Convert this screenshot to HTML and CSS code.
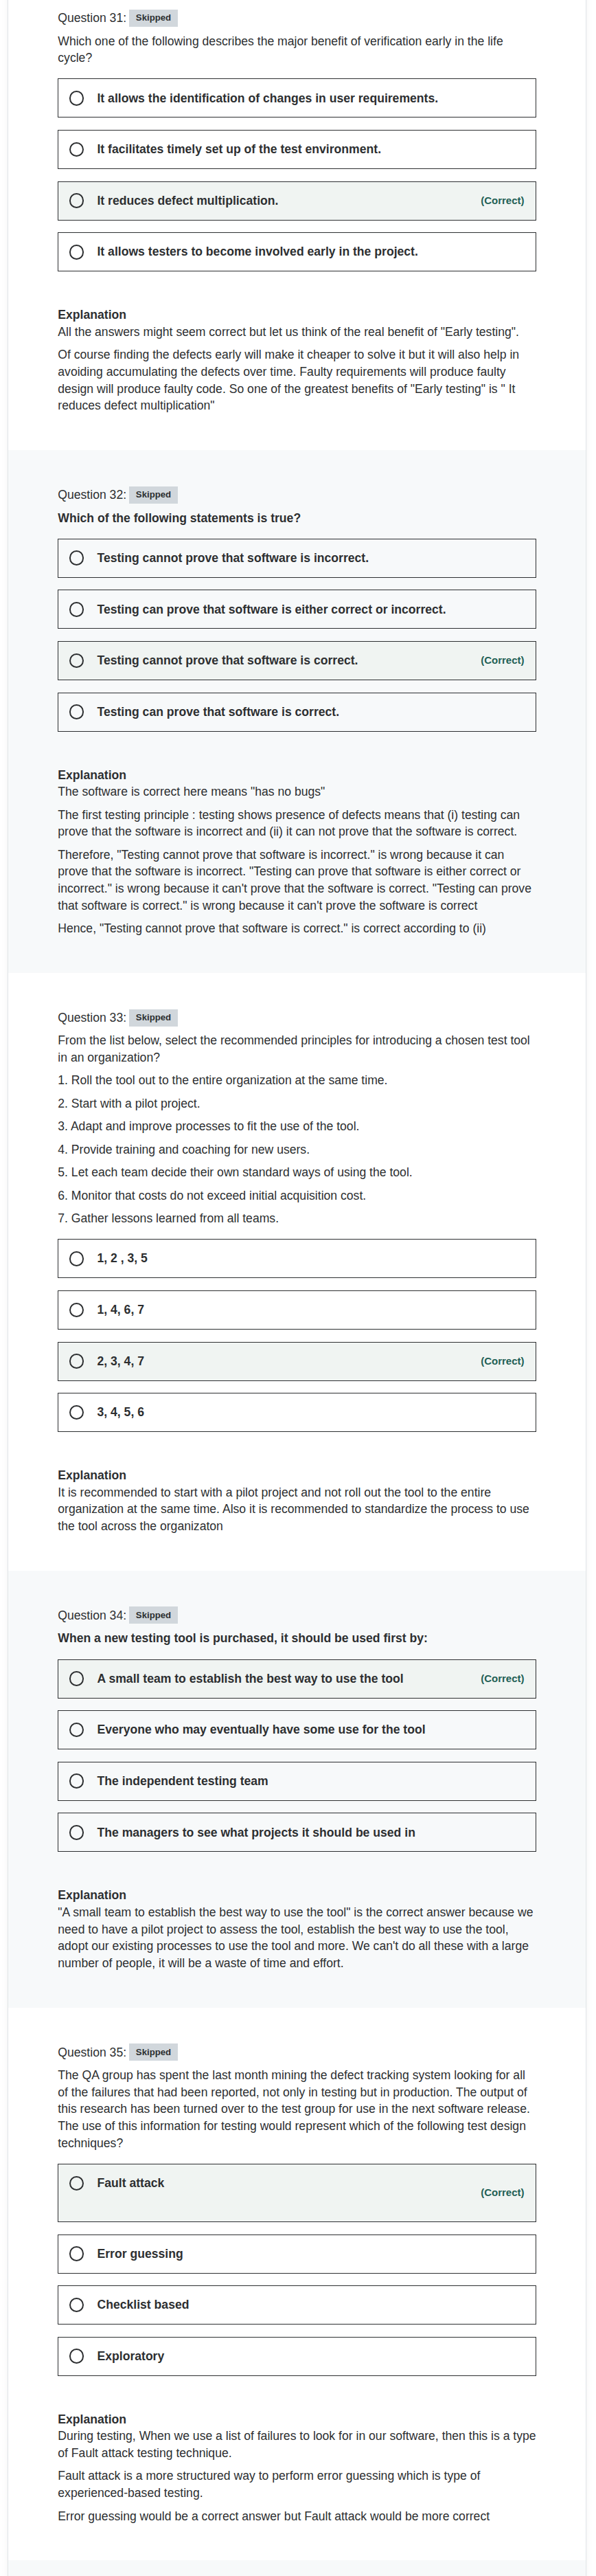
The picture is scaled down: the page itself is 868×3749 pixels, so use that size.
FILE: index.html
```html
<!DOCTYPE html>
<html lang="en">
<head>
<meta charset="utf-8">
<title>Practice Test Results</title>
<link rel="stylesheet" href="styles.css">
</head>
<body>
<div class="card">

  <section class="question">
    <div class="q-header"><span class="q-label">Question 31:</span><span class="badge">Skipped</span></div>
    <div class="q-prompt"><p>Which one of the following describes the major benefit of verification early in the life cycle?</p></div>
    <ul class="answers">
      <li class="answer"><div class="answer-main"><span class="radio"></span><span class="answer-text">It allows the identification of changes in user requirements.</span></div></li>
      <li class="answer"><div class="answer-main"><span class="radio"></span><span class="answer-text">It facilitates timely set up of the test environment.</span></div></li>
      <li class="answer answer--correct"><div class="answer-main"><span class="radio"></span><span class="answer-text">It reduces defect multiplication.</span></div><span class="correct-label">(Correct)</span></li>
      <li class="answer"><div class="answer-main"><span class="radio"></span><span class="answer-text">It allows testers to become involved early in the project.</span></div></li>
    </ul>
    <div class="explanation">
      <h4 class="explanation-title">Explanation</h4>
      <p>All the answers might seem correct but let us think of the real benefit of "Early testing".</p>
      <p>Of course finding the defects early will make it cheaper to solve it but it will also help in avoiding accumulating the defects over time. Faulty requirements will produce faulty design will produce faulty code. So one of the greatest benefits of "Early testing" is " It reduces defect multiplication"</p>
    </div>
  </section>

  <section class="question question--alt">
    <div class="q-header"><span class="q-label">Question 32:</span><span class="badge">Skipped</span></div>
    <div class="q-prompt q-prompt--bold"><p>Which of the following statements is true?</p></div>
    <ul class="answers">
      <li class="answer"><div class="answer-main"><span class="radio"></span><span class="answer-text">Testing cannot prove that software is incorrect.</span></div></li>
      <li class="answer"><div class="answer-main"><span class="radio"></span><span class="answer-text">Testing can prove that software is either correct or incorrect.</span></div></li>
      <li class="answer answer--correct"><div class="answer-main"><span class="radio"></span><span class="answer-text">Testing cannot prove that software is correct.</span></div><span class="correct-label">(Correct)</span></li>
      <li class="answer"><div class="answer-main"><span class="radio"></span><span class="answer-text">Testing can prove that software is correct.</span></div></li>
    </ul>
    <div class="explanation">
      <h4 class="explanation-title">Explanation</h4>
      <p>The software is correct here means "has no bugs"</p>
      <p>The first testing principle : testing shows presence of defects means that (i) testing can prove that the software is incorrect and (ii) it can not prove that the software is correct.</p>
      <p>Therefore, "Testing cannot prove that software is incorrect." is wrong because it can prove that the software is incorrect. "Testing can prove that software is either correct or incorrect." is wrong because it can't prove that the software is correct. "Testing can prove that software is correct." is wrong because it can't prove the software is correct</p>
      <p>Hence, "Testing cannot prove that software is correct." is correct according to (ii)</p>
    </div>
  </section>

  <section class="question">
    <div class="q-header"><span class="q-label">Question 33:</span><span class="badge">Skipped</span></div>
    <div class="q-prompt">
      <p>From the list below, select the recommended principles for introducing a chosen test tool in an organization?</p>
      <p>1. Roll the tool out to the entire organization at the same time.</p>
      <p>2. Start with a pilot project.</p>
      <p>3. Adapt and improve processes to fit the use of the tool.</p>
      <p>4. Provide training and coaching for new users.</p>
      <p>5. Let each team decide their own standard ways of using the tool.</p>
      <p>6. Monitor that costs do not exceed initial acquisition cost.</p>
      <p>7. Gather lessons learned from all teams.</p>
    </div>
    <ul class="answers">
      <li class="answer"><div class="answer-main"><span class="radio"></span><span class="answer-text">1, 2 , 3, 5</span></div></li>
      <li class="answer"><div class="answer-main"><span class="radio"></span><span class="answer-text">1, 4, 6, 7</span></div></li>
      <li class="answer answer--correct"><div class="answer-main"><span class="radio"></span><span class="answer-text">2, 3, 4, 7</span></div><span class="correct-label">(Correct)</span></li>
      <li class="answer"><div class="answer-main"><span class="radio"></span><span class="answer-text">3, 4, 5, 6</span></div></li>
    </ul>
    <div class="explanation">
      <h4 class="explanation-title">Explanation</h4>
      <p>It is recommended to start with a pilot project and not roll out the tool to the entire organization at the same time. Also it is recommended to standardize the process to use the tool across the organizaton</p>
    </div>
  </section>

  <section class="question question--alt">
    <div class="q-header"><span class="q-label">Question 34:</span><span class="badge">Skipped</span></div>
    <div class="q-prompt q-prompt--bold"><p>When a new testing tool is purchased, it should be used first by:</p></div>
    <ul class="answers">
      <li class="answer answer--correct"><div class="answer-main"><span class="radio"></span><span class="answer-text">A small team to establish the best way to use the tool</span></div><span class="correct-label">(Correct)</span></li>
      <li class="answer"><div class="answer-main"><span class="radio"></span><span class="answer-text">Everyone who may eventually have some use for the tool</span></div></li>
      <li class="answer"><div class="answer-main"><span class="radio"></span><span class="answer-text">The independent testing team</span></div></li>
      <li class="answer"><div class="answer-main"><span class="radio"></span><span class="answer-text">The managers to see what projects it should be used in</span></div></li>
    </ul>
    <div class="explanation">
      <h4 class="explanation-title">Explanation</h4>
      <p>"A small team to establish the best way to use the tool" is the correct answer because we need to have a pilot project to assess the tool, establish the best way to use the tool, adopt our existing processes to use the tool and more. We can't do all these with a large number of people, it will be a waste of time and effort.</p>
    </div>
  </section>

  <section class="question">
    <div class="q-header"><span class="q-label">Question 35:</span><span class="badge">Skipped</span></div>
    <div class="q-prompt"><p>The QA group has spent the last month mining the defect tracking system looking for all of the failures that had been reported, not only in testing but in production. The output of this research has been turned over to the test group for use in the next software release. The use of this information for testing would represent which of the following test design techniques?</p></div>
    <ul class="answers">
      <li class="answer answer--correct"><div class="answer-main"><span class="radio"></span><span class="answer-text answer-text--tall">Fault attack</span></div><span class="correct-label">(Correct)</span></li>
      <li class="answer"><div class="answer-main"><span class="radio"></span><span class="answer-text">Error guessing</span></div></li>
      <li class="answer"><div class="answer-main"><span class="radio"></span><span class="answer-text">Checklist based</span></div></li>
      <li class="answer"><div class="answer-main"><span class="radio"></span><span class="answer-text">Exploratory</span></div></li>
    </ul>
    <div class="explanation">
      <h4 class="explanation-title">Explanation</h4>
      <p>During testing, When we use a list of failures to look for in our software, then this is a type of Fault attack testing technique.</p>
      <p>Fault attack is a more structured way to perform error guessing which is type of experienced-based testing.</p>
      <p>Error guessing would be a correct answer but Fault attack would be more correct</p>
    </div>
  </section>

  <div class="card-tail"></div>
</div>
</body>
</html>
```

FILE: styles.css
```css
html, body {
  margin: 0;
  padding: 0;
  background: #ffffff;
}

body {
  font-family: "Liberation Sans", Arial, sans-serif;
  font-size: 17.6px;
  line-height: 24.64px;
  color: #2d2f31;
}

.card {
  margin: -39px 15px 0 12px;
  background: #ffffff;
  box-shadow: 0 0 0 1px #e2e6e9, 0 2px 4px rgba(0, 0, 0, 0.06), 0 4px 12px rgba(0, 0, 0, 0.05);
}

.question {
  padding: 52.8px 72px 43.2px 72.3px;
}

.question--alt {
  background: #f7f9fa;
}

.q-header {
  display: flex;
  align-items: center;
  height: 25px;
  margin-bottom: 8.8px;
}

.q-label {
  font-size: 17.6px;
  font-weight: 400;
}

.badge {
  margin-left: 4.4px;
  height: 25px;
  padding: 0 9.4px;
  display: inline-flex;
  align-items: center;
  background: #d1d7dc;
  font-size: 13.2px;
  font-weight: 700;
  color: #2d2f31;
}

.q-prompt {
  display: flow-root;
}

.q-prompt p {
  margin: 0 0 8.8px;
}

.q-prompt--bold {
  font-weight: 700;
}

.answers {
  list-style: none;
  margin: 8.8px 0 0;
  padding: 0;
  display: flex;
  flex-direction: column;
  gap: 17.6px;
}

.answer {
  display: flex;
  align-items: center;
  box-sizing: border-box;
  min-height: 57px;
  border: 1px solid #2d2f31;
  padding: 15.2px 16.5px 15.2px 15.6px;
}

.answer--correct {
  background: #f0f4f2;
}

.answer-main {
  flex: 1;
  display: flex;
  align-items: flex-start;
}

.radio {
  flex: none;
  width: 21.6px;
  height: 21.6px;
  box-sizing: border-box;
  border: 2px solid #2d2f31;
  border-radius: 50%;
  margin: 1.5px 19px 0 0;
}

.answer-text {
  font-weight: 700;
}

.answer-text--tall {
  padding-bottom: 28px;
}

.correct-label {
  flex: none;
  font-size: 15px;
  font-weight: 700;
  color: #1e6055;
}

.explanation {
  margin-top: 51px;
}

.explanation-title {
  margin: 0;
  font-size: 17.6px;
  line-height: 24.64px;
  font-weight: 700;
}

.explanation p {
  margin: 0 0 8.8px;
}

.card-tail {
  height: 60px;
  background: #f7f9fa;
}
```
